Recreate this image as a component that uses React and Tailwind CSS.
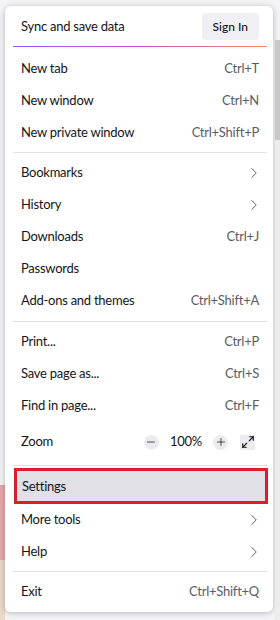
import { ChevronRight, Minus, Plus, Maximize2 } from 'lucide-react';

const groups = [
  [
    { label: 'New tab', key: 'Ctrl+T' },
    { label: 'New window', key: 'Ctrl+N' },
    { label: 'New private window', key: 'Ctrl+Shift+P' },
  ],
  [
    { label: 'Bookmarks', arrow: true },
    { label: 'History', arrow: true },
    { label: 'Downloads', key: 'Ctrl+J' },
    { label: 'Passwords' },
    { label: 'Add-ons and themes', key: 'Ctrl+Shift+A' },
  ],
  [
    { label: 'Print...', key: 'Ctrl+P' },
    { label: 'Save page as...', key: 'Ctrl+S' },
    { label: 'Find in page...', key: 'Ctrl+F' },
  ],
];

function Row({ item }) {
  return (
    <div className="h-8 flex items-center justify-between px-2">
      <span>{item.label}</span>
      {item.key && <span className="text-[#5b5b66]">{item.key}</span>}
      {item.arrow && <ChevronRight className="w-[18px] h-[18px] text-[#5b5b66] -mr-1" strokeWidth={1.3} />}
    </div>
  );
}

export default function App() {
  return (
    <div
      className="w-[280px] h-[620px] bg-[#f4f4f6] flex overflow-hidden text-[13px] tracking-[-0.25px] text-[#15141a]"
      style={{ fontFamily: 'Lato, "Noto Sans", sans-serif' }}
    >
      <div className="w-[5px] flex flex-col">
        <div className="h-[485px]" />
        <div className="h-[75px] bg-[#e8a8ac]" />
        <div className="flex-1 bg-[#e9d9c8]" />
      </div>
      <div className="w-[268px] mt-[6px] mb-[8px] bg-white rounded-md shadow-[0_1px_6px_rgba(0,0,0,0.25)] pl-2 pr-[6px] flex flex-col">
        <div className="flex items-center justify-between h-[40px] pl-2 pr-2 pt-[1px]">
          <span>Sync and save data</span>
          <span className="bg-[#f0f0f4] rounded px-[11px] h-[27px] flex items-center text-[12px] font-medium tracking-normal">Sign In</span>
        </div>
        <div className="h-px bg-gradient-to-r from-[#9059ff] via-[#c24fbd] to-[#ff8a50] mb-[6px]" />
        {groups[0].map((item) => <Row key={item.label} item={item} />)}
        <div className="h-px bg-[#e0e0e6] mt-[3px] mb-[4px]" />
        {groups[1].map((item) => <Row key={item.label} item={item} />)}
        <div className="h-px bg-[#e0e0e6] my-[4px]" />
        {groups[2].map((item) => <Row key={item.label} item={item} />)}
        <div className="h-10 flex items-center justify-between px-2">
          <span>Zoom</span>
          <div className="flex items-center mr-[4px]">
            <span className="w-[15px] h-[15px] rounded-full bg-[#ececf0] flex items-center justify-center">
              <Minus className="w-3 h-3" strokeWidth={1.5} />
            </span>
            <span className="mx-[11px]">100%</span>
            <span className="w-[15px] h-[15px] rounded-full bg-[#ececf0] flex items-center justify-center">
              <Plus className="w-3 h-3" strokeWidth={1.5} />
            </span>
            <span className="ml-[12px] w-[15px] h-[15px] bg-[#ececf0] flex items-center justify-center">
              <Maximize2 className="w-3.5 h-3.5" strokeWidth={2} />
            </span>
          </div>
        </div>
        <div className="h-px bg-[#e0e0e6] mt-[3px] mb-[2px]" />
        <div className="h-[36px] flex items-center pl-[5px] pt-[1px] bg-[#e0e0e6] border-[3px] border-[#d7202e] ml-[1px] -mr-[1px]">
          <span>Settings</span>
        </div>
        <Row item={{ label: 'More tools', arrow: true }} />
        <Row item={{ label: 'Help', arrow: true }} />
        <div className="h-px bg-[#e0e0e6] mt-[3px] mb-[4px]" />
        <Row item={{ label: 'Exit', key: 'Ctrl+Shift+Q' }} />
      </div>
      <div className="w-[7px] flex flex-col">
        <div className="h-[40px]" />
        <div className="h-[100px] bg-[#c7c7c7] ml-[2px]" />
        <div className="flex-1 bg-[#ececec] ml-[2px]" />
      </div>
    </div>
  );
}
